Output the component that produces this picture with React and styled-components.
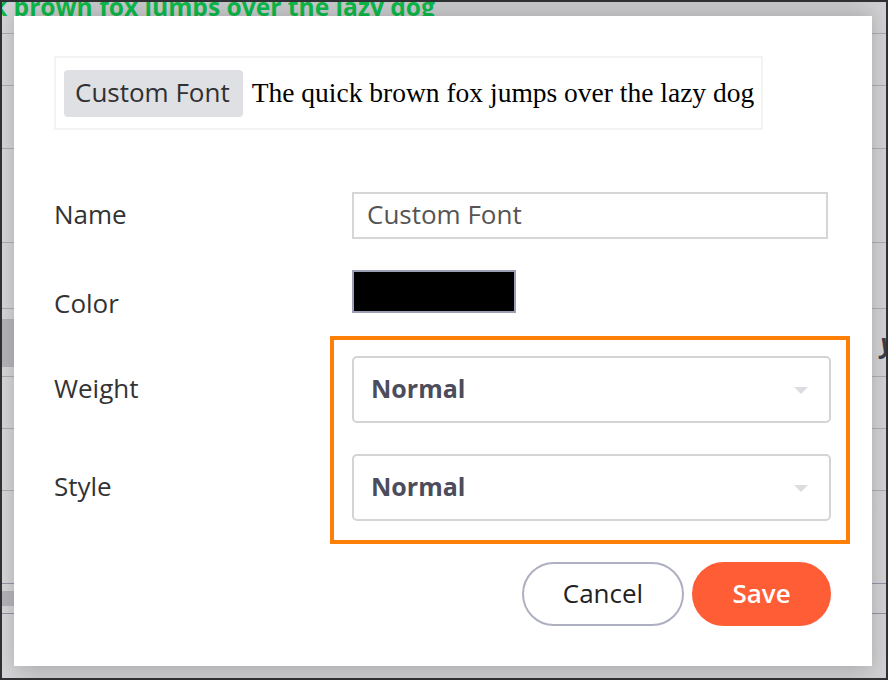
import React from "react";
import styled, { createGlobalStyle } from "styled-components";

const GlobalStyle = createGlobalStyle`
  html, body {
    margin: 0;
    padding: 0;
    background: #fff;
  }
  * {
    box-sizing: border-box;
  }
`;

const UI_FONT = `"Open Sans", Lato, "Liberation Sans", sans-serif`;

const Frame = styled.div`
  position: relative;
  width: 888px;
  height: 680px;
  border: 2px solid #2f3034;
  overflow: hidden;
  background: linear-gradient(90deg, #d3d3d5 0%, #c5c5c7 4%, #c5c5c7 96%, #cfcfd1 100%);
  font-family: ${UI_FONT};
`;

const Backdrop = styled.div`
  display: flex;
  flex-direction: column;
  height: 100%;
`;

const BgTitle = styled.div`
  display: flex;
  justify-content: flex-end;
  width: 433px;
  height: 32px;
  margin-top: -7px;
  margin-bottom: 6px;
  white-space: nowrap;
  font: 700 24.6px/1 ${UI_FONT};
  color: #0bb548;
`;

const BgRow = styled.div`
  height: ${(p) => p.$h}px;
  border-bottom: 1px solid ${(p) => (p.$blue ? "#8f91a3" : "#a9a9ad")};
  display: flex;
  align-items: center;
  justify-content: space-between;
`;

const BgTopLine = styled.div`
  height: 1px;
  background: #a9a9ad;
`;

const BgBlock = styled.div`
  width: 12px;
  height: ${(p) => p.$h}px;
  background: #b1b1b5;
`;

const BgGlyph = styled.span`
  font: italic 700 26px/1 ${UI_FONT};
  color: #3a3b4a;
  margin-right: -8px;
`;

const Modal = styled.div`
  position: absolute;
  left: 12px;
  top: 14px;
  width: 858px;
  height: 650px;
  background: #fff;
  box-shadow: 0 0 14px rgba(0, 0, 0, 0.14);
  padding: 40px 41px 0 40px;
  display: flex;
  flex-direction: column;
`;

const Preview = styled.div`
  width: 709px;
  height: 74px;
  border: 2px solid #f3f3f3;
  display: flex;
  align-items: center;
  padding-left: 8px;
`;

const Chip = styled.span`
  height: 47px;
  display: flex;
  align-items: center;
  padding: 0 13px 2px 11px;
  background: #dfe0e3;
  border-radius: 4px;
  font-size: 26px;
  color: #303033;
`;

const Sample = styled.span`
  margin-left: 9px;
  font-family: "Liberation Serif", "Times New Roman", serif;
  font-size: 27.5px;
  color: #000;
`;

const FieldRow = styled.div`
  display: grid;
  grid-template-columns: 298px 1fr;
  align-items: center;
  margin-top: ${(p) => p.$top}px;
`;

const Label = styled.label`
  font-size: 26px;
  line-height: 30px;
  padding-bottom: 4px;
  color: #333;
  align-self: ${(p) => (p.$drop ? "end" : "center")};
  margin-bottom: ${(p) => (p.$drop ? -p.$drop : 0)}px;
`;

const TextInput = styled.div`
  width: 476px;
  height: 47px;
  border: 2px solid #d6d6d6;
  display: flex;
  align-items: center;
  padding: 0 0 4px 13px;
  font-size: 26px;
  color: #555;
`;

const Swatch = styled.div`
  width: 164px;
  height: 43px;
  background: ${(p) => p.$color};
  border: 2px solid #9c9eb3;
`;

const Select = styled.div`
  width: 479px;
  height: 67px;
  border: 2px solid #d4d4d6;
  border-radius: 5px;
  display: flex;
  align-items: center;
  justify-content: space-between;
  padding: 0 21px 3px 17px;
  font-size: 25px;
  font-weight: 700;
  color: #4b4c5c;
`;

const Caret = styled.span`
  width: 0;
  height: 0;
  border-left: 7px solid transparent;
  border-right: 7px solid transparent;
  border-top: 7px solid #dcdde1;
  margin-top: 4px;
`;

const Highlight = styled.div`
  position: absolute;
  left: 316px;
  top: 320px;
  width: 520px;
  height: 208px;
  border: 4px solid #fd7f05;
  pointer-events: none;
`;

const Actions = styled.div`
  display: flex;
  justify-content: flex-end;
  gap: 8px;
  margin-top: 41px;
`;

const Button = styled.button`
  width: ${(p) => p.$w}px;
  height: 64px;
  padding: 0 0 2px;
  border-radius: 32px;
  font-family: ${UI_FONT};
  font-size: 26px;
  cursor: pointer;
  border: 2px solid ${(p) => (p.$primary ? "#ff5d36" : "#aeb0c2")};
  background: ${(p) => (p.$primary ? "#ff5d36" : "#fff")};
  color: ${(p) => (p.$primary ? "#fff" : "#222")};
  font-weight: ${(p) => (p.$primary ? 600 : 400)};
`;

const bgRows = [
  { h: 52 },
  { h: 63 },
  { h: 94 },
  { h: 66 },
  { h: 68, content: "mark" },
  { h: 52 },
  { h: 62 },
  { h: 93, blue: true },
  { h: 30, blue: true, content: "block" },
];

export default function App() {
  return (
    <>
      <GlobalStyle />
      <Frame>
        <Backdrop>
          <BgTitle>The quick brown fox jumps over the lazy dog</BgTitle>
          <BgTopLine />
          {bgRows.map((r, i) => (
            <BgRow key={i} $h={r.h} $blue={r.blue}>
              {r.content === "mark" && (
                <>
                  <BgBlock $h={48} />
                  <BgGlyph>y</BgGlyph>
                </>
              )}
              {r.content === "block" && <BgBlock $h={15} />}
            </BgRow>
          ))}
        </Backdrop>

        <Modal>
          <Preview>
            <Chip>Custom Font</Chip>
            <Sample>The quick brown fox jumps over the lazy dog</Sample>
          </Preview>

          <FieldRow $top={62}>
            <Label>Name</Label>
            <TextInput>Custom Font</TextInput>
          </FieldRow>

          <FieldRow $top={31}>
            <Label $drop={9}>Color</Label>
            <Swatch $color="#000" />
          </FieldRow>

          <FieldRow $top={43}>
            <Label>Weight</Label>
            <Select>
              Normal
              <Caret />
            </Select>
          </FieldRow>

          <FieldRow $top={31}>
            <Label>Style</Label>
            <Select>
              Normal
              <Caret />
            </Select>
          </FieldRow>

          <Actions>
            <Button $w={162}>Cancel</Button>
            <Button $w={139} $primary>
              Save
            </Button>
          </Actions>

          <Highlight />
        </Modal>
      </Frame>
    </>
  );
}
